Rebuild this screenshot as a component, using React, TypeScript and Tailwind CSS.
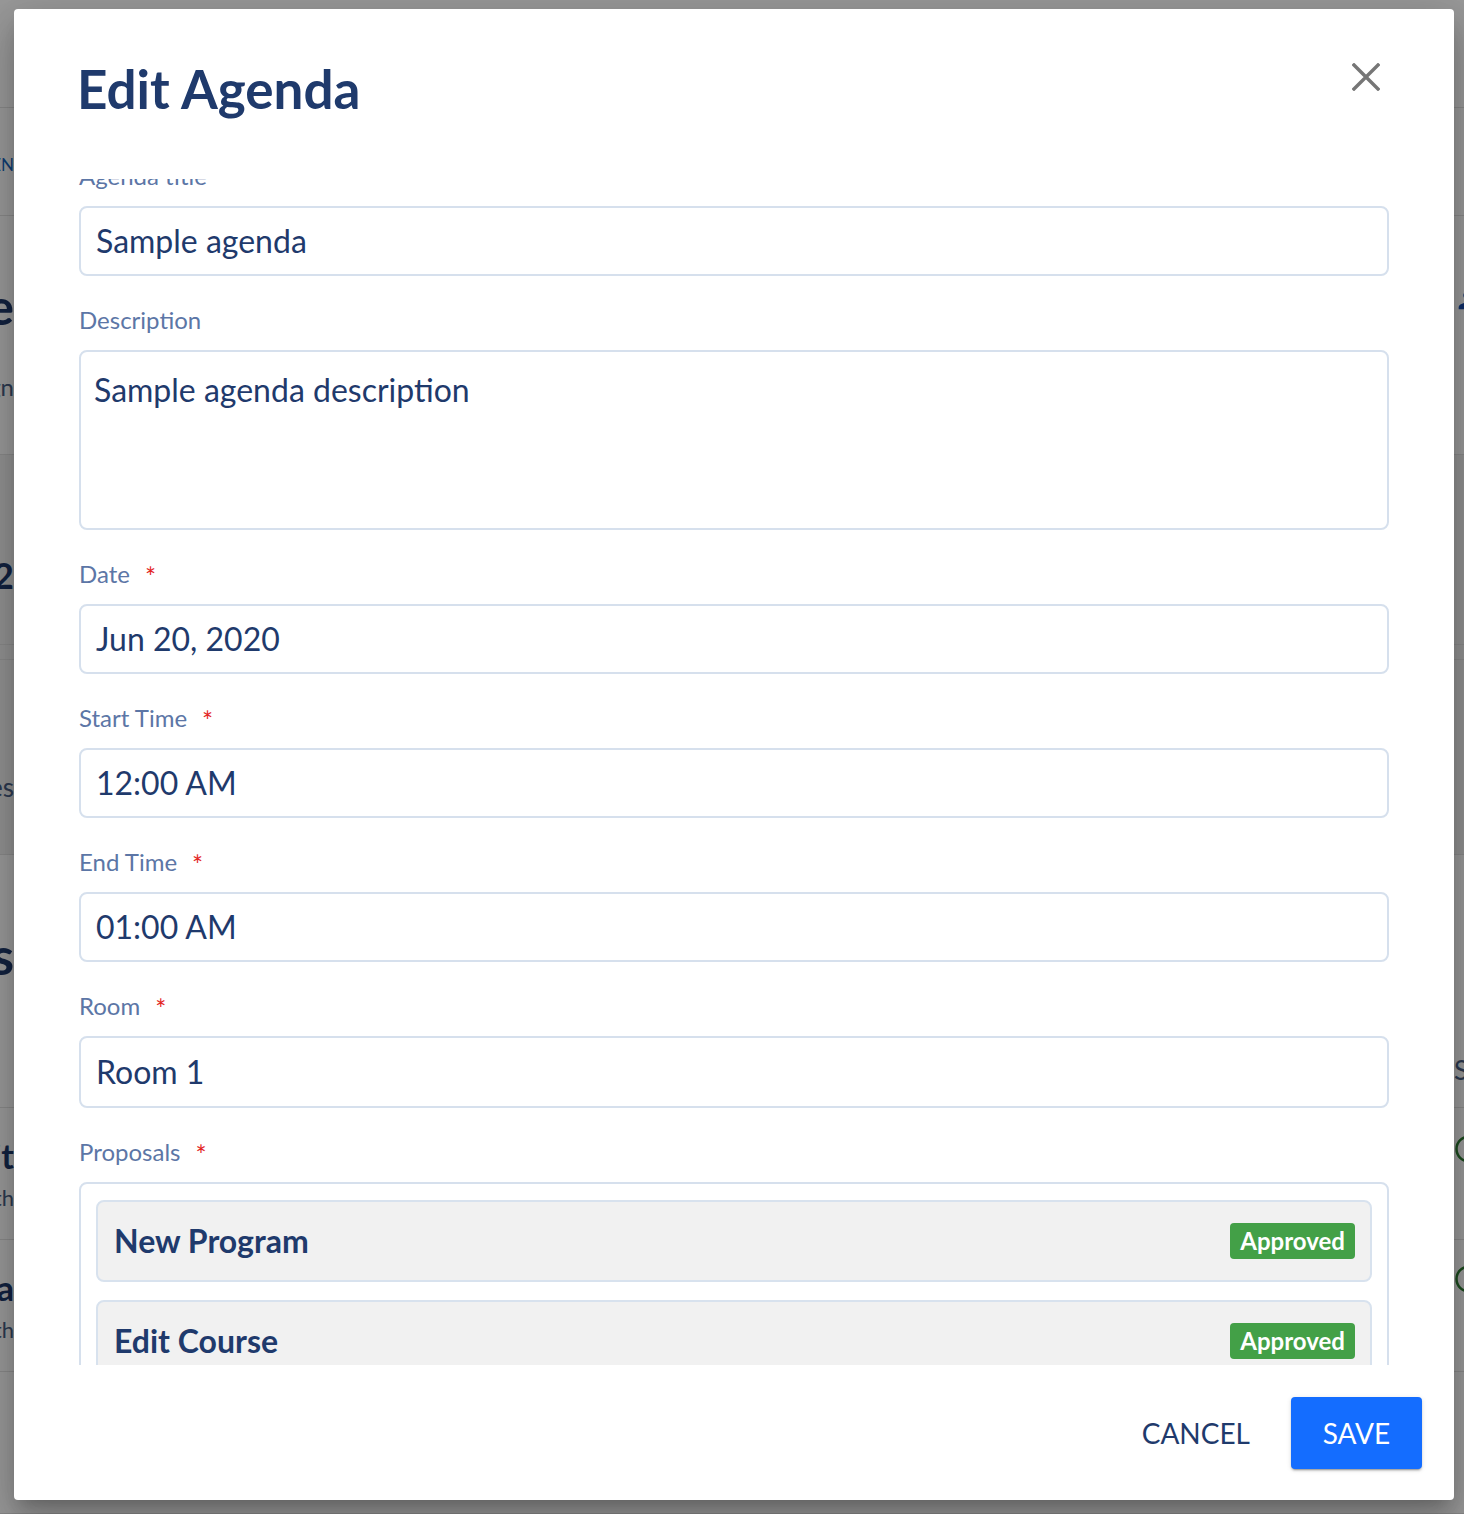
import React from "react";
import { CircleCheck } from "lucide-react";

const NAVY = "text-[#1f3a6c]";

function Label({ text, required }: { text: string; required?: boolean }) {
  return (
    <div className="mt-[28px] mb-[14px] h-[32px] flex items-center text-[24px] leading-[32px] text-[#5c76a6]">
      <span>{text}</span>
      {required && <span className="ml-[15px] text-[26px] leading-none text-[#e3261f] mt-[6px]">*</span>}
    </div>
  );
}

function Field({ value }: { value: string }) {
  return (
    <div className="h-[70px] border-2 border-[#d6e0ed] rounded-[8px] px-[15px] flex items-center text-[32px] text-[#1f3a6c]">
      {value}
    </div>
  );
}

function Proposal({ title }: { title: string }) {
  return (
    <div className="h-[82px] shrink-0 bg-[#f1f1f1] border-2 border-[#d8e2ee] rounded-[8px] pl-[16px] pr-[15px] flex items-center justify-between">
      <span className="text-[32px] font-bold text-[#1f3a6c]">{title}</span>
      <span className="h-[36px] px-[10px] bg-[#43a047] rounded-[4px] text-white font-bold text-[24px] flex items-center">Approved</span>
    </div>
  );
}

function EdgeRow({
  h,
  cls = "",
  left,
  right,
}: {
  h: string;
  cls?: string;
  left?: React.ReactNode;
  right?: React.ReactNode;
}) {
  return (
    <div className={`flex shrink-0 border-b border-[#e3e3e3] ${h} ${cls}`}>
      <div className="w-[14px] overflow-hidden flex flex-col items-end whitespace-nowrap">{left}</div>
      <div className="flex-1" />
      <div className="w-[10px] overflow-hidden flex flex-col whitespace-nowrap">{right}</div>
    </div>
  );
}

export default function App() {
  return (
    <div className="relative w-[1464px] h-[1514px] overflow-hidden bg-white" style={{ fontFamily: "Lato, 'Open Sans', sans-serif" }}>
      {/* background page */}
      <div className="flex flex-col">
        <EdgeRow h="h-[108px]" />
        <EdgeRow
          h="h-[108px]"
          left={<span className="mt-[44px] text-[17px] text-[#1565c0]">AGEN</span>}
        />
        <EdgeRow
          h="h-[239px]"
          left={
            <>
              <span className="mt-[60px] text-[50px] leading-[60px] font-bold text-[#1f3a6c]">Agenda Schedule</span>
              <span className="mt-[36px] text-[24px] leading-[30px] text-[#4a5f86]">Agenda design</span>
            </>
          }
          right={
            <svg className="mt-[70px] ml-0" width="28" height="28" viewBox="0 0 24 24">
              <path fill="#1a4fb0" d="M12 12c2.21 0 4-1.79 4-4s-1.79-4-4-4-4 1.79-4 4 1.79 4 4 4zm0 2c-2.67 0-8 1.34-8 4v2h16v-2c0-2.66-5.33-4-8-4z" />
            </svg>
          }
        />
        <EdgeRow
          h="h-[190px]"
          cls="bg-[#f2f2f2]"
          left={<span className="mt-[100px] text-[36px] leading-[40px] font-bold text-[#1f3a6c]">2</span>}
        />
        <EdgeRow h="h-[15px]" cls="bg-[#f2f2f2]" />
        <EdgeRow
          h="h-[195px]"
          cls="bg-[#f2f2f2]"
          left={<span className="mt-[112px] text-[26px] leading-[30px] text-[#4a5f86]">Services</span>}
        />
        <EdgeRow
          h="h-[253px]"
          left={<span className="mt-[70px] text-[52px] leading-[60px] font-bold text-[#1f3a6c]">Proposals</span>}
          right={<span className="mt-[200px] text-[26px] leading-[30px] text-[#4a5f86]">Status</span>}
        />
        <EdgeRow
          h="h-[132px]"
          left={
            <>
              <span className="mt-[28px] text-[34px] leading-[40px] font-bold text-[#1f3a6c]">Edit Unit</span>
              <span className="mt-[6px] text-[22px] leading-[32px] text-[#4a5f86]">Edit th</span>
            </>
          }
          right={<CircleCheck className="mt-[26px]" size={30} color="#2e7d32" strokeWidth={2} />}
        />
        <EdgeRow
          h="h-[132px]"
          left={
            <>
              <span className="mt-[28px] text-[34px] leading-[40px] font-bold text-[#1f3a6c]">New Progra</span>
              <span className="mt-[6px] text-[22px] leading-[32px] text-[#4a5f86]">Add th</span>
            </>
          }
          right={<CircleCheck className="mt-[24px]" size={30} color="#2e7d32" strokeWidth={2} />}
        />
        <EdgeRow h="h-[142px]" />
      </div>

      {/* overlay */}
      <div className="absolute inset-0 bg-black/40" />

      {/* modal */}
      <div className="absolute left-[14px] top-[9px] w-[1440px] h-[1491px] bg-white rounded-[4px] flex flex-col shadow-[0_11px_15px_-7px_rgba(0,0,0,0.2),0_24px_38px_3px_rgba(0,0,0,0.14),0_9px_46px_8px_rgba(0,0,0,0.12)]">
        <div className="h-[170px] shrink-0 pl-[63px] pr-[74px] pt-[49px] flex justify-between items-start">
          <h1 className={`text-[53px] leading-[62px] font-bold ${NAVY}`}>Edit Agenda</h1>
          <svg className="mt-[5px]" width="28" height="28" viewBox="0 0 28 28">
            <path d="M2 2 L26 26 M26 2 L2 26" stroke="#767676" strokeWidth="3.4" strokeLinecap="square" />
          </svg>
        </div>

        <div className="flex-1 overflow-hidden px-[65px]">
          <div className="-mt-[47px]">
            <Label text="Agenda title" />
            <Field value="Sample agenda" />
            <Label text="Description" />
            <div className="h-[180px] border-2 border-[#d6e0ed] rounded-[8px] pl-[13px] pt-[19px] text-[32px] leading-[38px] text-[#1f3a6c]">
              Sample agenda description
            </div>
            <Label text="Date" required />
            <Field value="Jun 20, 2020" />
            <Label text="Start Time" required />
            <Field value="12:00 AM" />
            <Label text="End Time" required />
            <Field value="01:00 AM" />
            <Label text="Room" required />
            <div className="h-[72px] border-2 border-[#d6e0ed] rounded-[8px] px-[15px] flex items-center text-[32px] text-[#1f3a6c]">Room 1</div>
            <Label text="Proposals" required />
            <div className="border-2 border-[#d6e0ed] rounded-[8px] px-[15px] pt-[16px] pb-[16px] flex flex-col gap-[18px]">
              <Proposal title="New Program" />
              <Proposal title="Edit Course" />
              <Proposal title="Edit Unit" />
            </div>
          </div>
        </div>

        <div className="h-[135px] shrink-0 flex justify-end items-end pr-[32px] pb-[31px] gap-[9px]">
          <button className="h-[72px] px-[32px] text-[28px] text-[#1f3a6c] uppercase">Cancel</button>
          <button className="h-[72px] w-[131px] bg-[#146dff] rounded-[4px] text-[28px] text-white uppercase shadow-[0_3px_1px_-2px_rgba(0,0,0,0.2),0_2px_2px_0_rgba(0,0,0,0.14),0_1px_5px_0_rgba(0,0,0,0.12)]">
            Save
          </button>
        </div>
      </div>
    </div>
  );
}
